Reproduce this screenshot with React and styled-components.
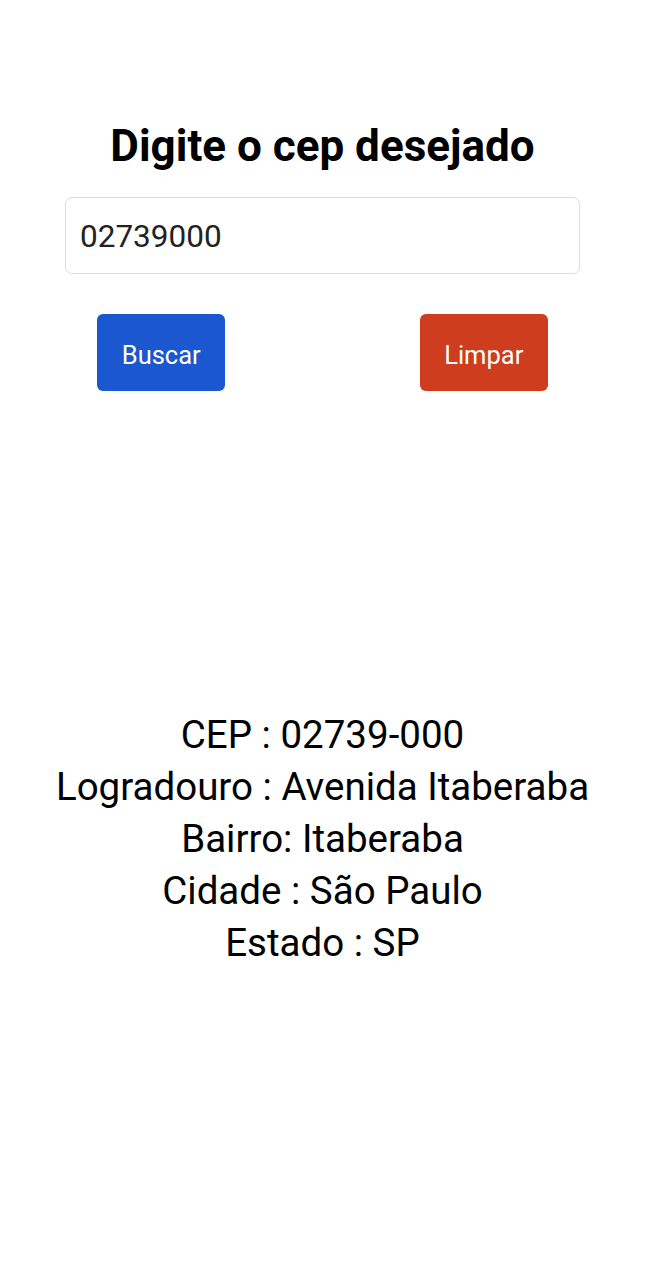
import React from "react";
import styled, { createGlobalStyle } from "styled-components";

const Global = createGlobalStyle`
  html, body { margin: 0; padding: 0; background: #fff; }
  body { font-family: Roboto, "Noto Sans", sans-serif; color: #000; }
`;

const Page = styled.main`
  display: flex;
  flex-direction: column;
  align-items: center;
  width: 645px;
  padding-top: 120px;
`;

const Title = styled.h1`
  margin: 0;
  font-size: 44px;
  font-weight: 700;
  line-height: 52px;
  text-align: center;
`;

const Input = styled.input`
  box-sizing: border-box;
  margin-top: 25px;
  width: 515px;
  height: 77px;
  border: 1.5px solid #dcdcdc;
  border-radius: 7px;
  padding: 2px 14px 0;
  font-family: Roboto, sans-serif;
  font-size: 31.5px;
  color: #222;
  outline: none;
  background: #fff;
`;

const ButtonRow = styled.div`
  display: flex;
  justify-content: space-around;
  width: 100%;
  margin-top: 40px;
`;

const Button = styled.button`
  width: 128px;
  height: 77px;
  padding: 4px 0 0;
  border: none;
  border-radius: 6px;
  background: ${(p) => p.$bg};
  color: #fff;
  font-family: Roboto, sans-serif;
  font-size: 25.5px;
  cursor: pointer;
`;

const Result = styled.section`
  margin-top: 318px;
  display: flex;
  flex-direction: column;
  align-items: center;
`;

const Line = styled.p`
  margin: 0;
  font-size: 38.5px;
  line-height: 52px;
  text-align: center;
`;

export default function App() {
  return (
    <>
      <Global />
      <Page>
        <Title>Digite o cep desejado</Title>
        <Input defaultValue="02739000" />
        <ButtonRow>
          <Button $bg="#1b57cf">Buscar</Button>
          <Button $bg="#cd3d1e">Limpar</Button>
        </ButtonRow>
        <Result>
          <Line>CEP : 02739-000</Line>
          <Line>Logradouro : Avenida Itaberaba</Line>
          <Line>Bairro: Itaberaba</Line>
          <Line>Cidade : São Paulo</Line>
          <Line>Estado : SP</Line>
        </Result>
      </Page>
    </>
  );
}
